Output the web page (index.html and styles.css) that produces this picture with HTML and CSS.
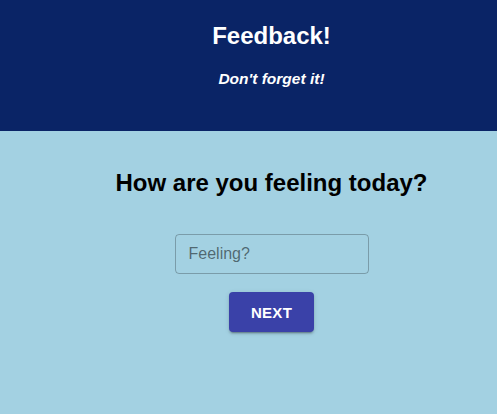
FILE: index.html
```html
<!DOCTYPE html>
<html lang="en">
<head>
<meta charset="utf-8">
<title>Feedback</title>
<link rel="stylesheet" href="styles.css">
</head>
<body>
<header class="header">
  <h1 class="title">Feedback!</h1>
  <p class="subtitle">Don't forget it!</p>
</header>
<main class="main">
  <h2 class="question">How are you feeling today?</h2>
  <form class="form">
    <input class="field" type="text" placeholder="Feeling?">
    <button class="next" type="button">NEXT</button>
  </form>
</main>
</body>
</html>
```
FILE: styles.css
```css
html, body {
  margin: 0;
  padding: 0;
  height: 100%;
}
body {
  font-family: "Liberation Sans", Arial, sans-serif;
  background: #a3d1e2;
}
.header {
  background: #0a2466;
  color: #ffffff;
  height: 131px;
  box-sizing: border-box;
  padding: 22px 0 0 46px;
  display: flex;
  flex-direction: column;
  align-items: center;
}
.title {
  margin: 0;
  font-size: 24px;
  line-height: 28px;
  font-weight: bold;
}
.subtitle {
  margin: 20px 0 0;
  font-size: 15.5px;
  line-height: 18px;
  font-weight: bold;
  font-style: italic;
}
.main {
  padding: 38px 0 0 46px;
  display: flex;
  flex-direction: column;
  align-items: center;
}
.question {
  margin: 0;
  font-size: 24px;
  line-height: 28px;
  font-weight: bold;
  color: #000000;
}
.form {
  margin-top: 37px;
  display: flex;
  flex-direction: column;
  align-items: center;
  gap: 18px;
}
.field {
  width: 194px;
  height: 40px;
  box-sizing: border-box;
  padding: 0 13px;
  border: 1px solid rgba(0, 0, 0, 0.25);
  border-radius: 4px;
  background: transparent;
  font-family: "Liberation Sans", Arial, sans-serif;
  font-size: 16px;
  color: #222;
  outline: none;
}
.field::placeholder {
  color: rgba(0, 0, 0, 0.52);
  opacity: 1;
}
.next {
  width: 85px;
  height: 40px;
  border: none;
  border-radius: 4px;
  background: #3a41a8;
  color: #ffffff;
  font-family: "Liberation Sans", Arial, sans-serif;
  font-size: 15px;
  font-weight: bold;
  letter-spacing: 0.3px;
  padding: 0;
  box-shadow: 0 3px 1px -2px rgba(0,0,0,0.2), 0 2px 2px 0 rgba(0,0,0,0.14), 0 1px 5px 0 rgba(0,0,0,0.12);
  cursor: pointer;
}
```
